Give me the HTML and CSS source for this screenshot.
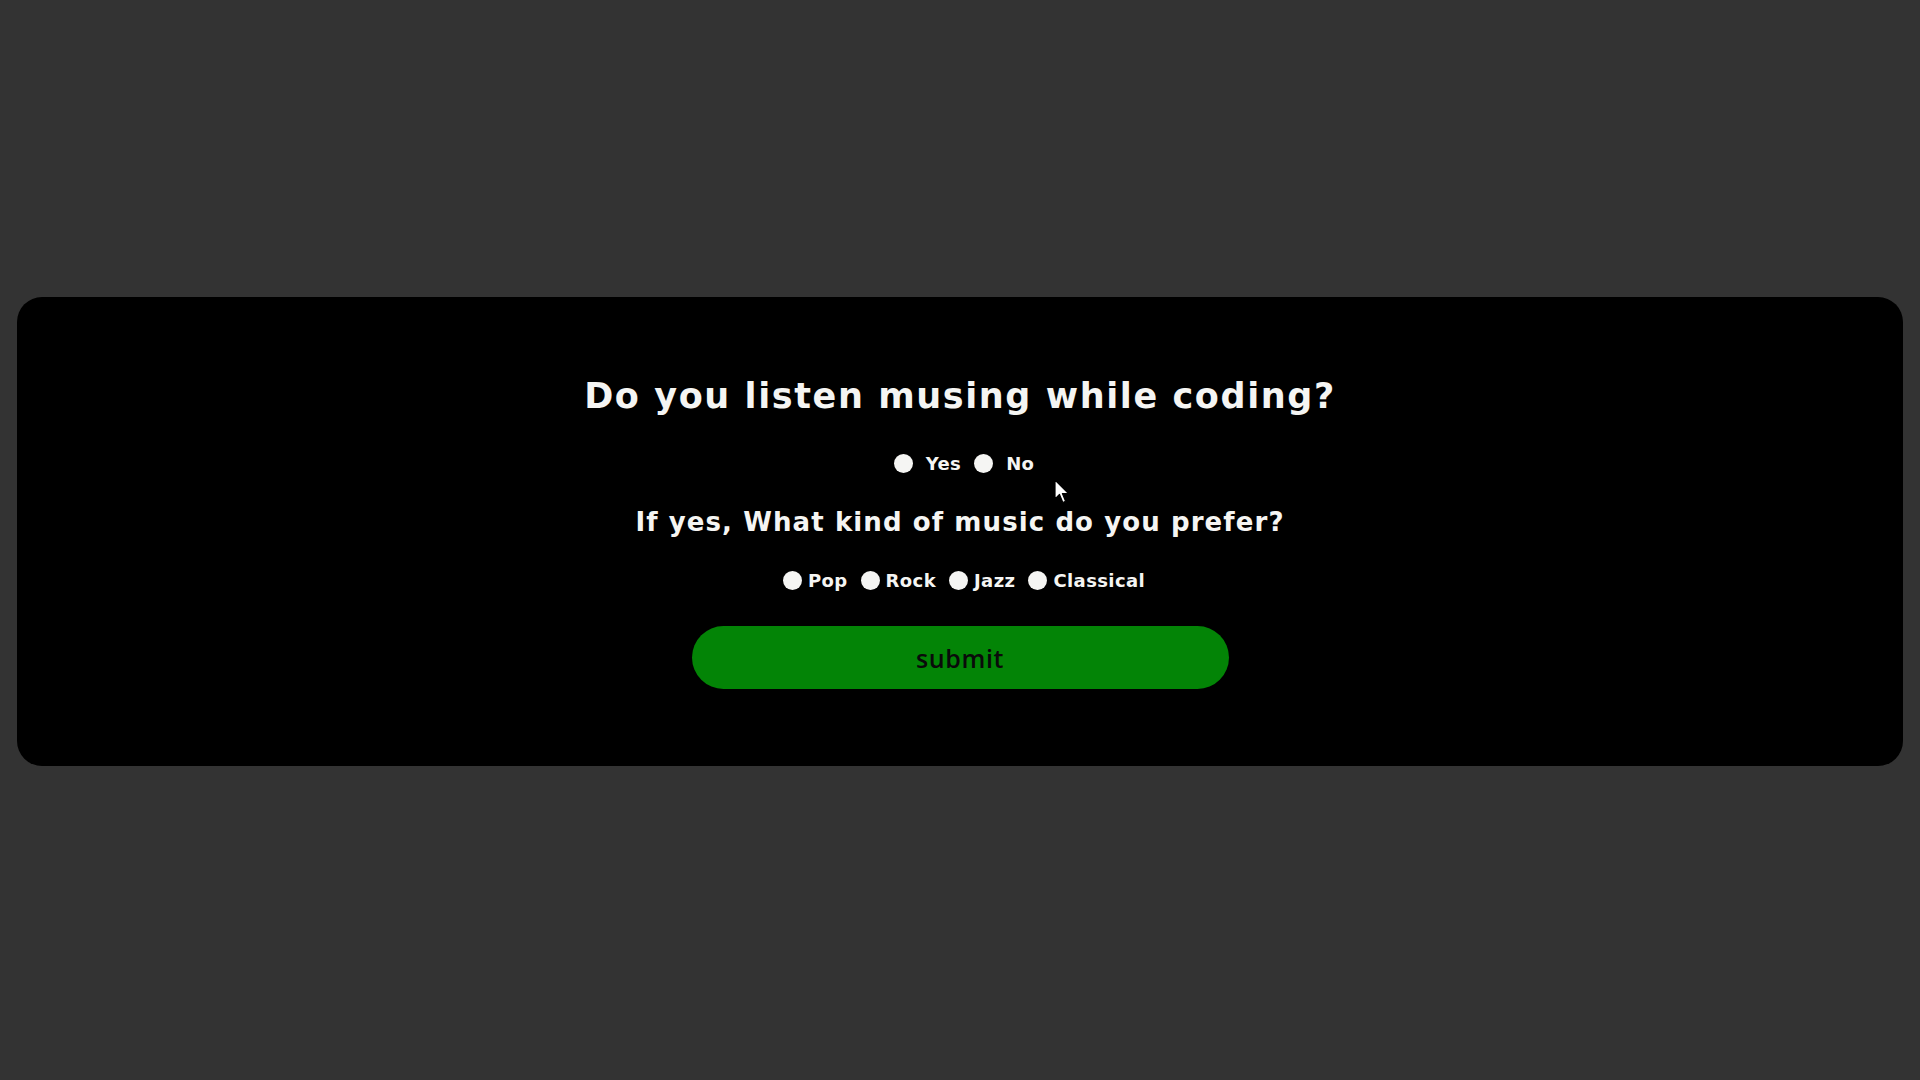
FILE: index.html
```html
<!DOCTYPE html>
<html lang="en">
<head>
<meta charset="utf-8">
<title>Music survey</title>
<link rel="stylesheet" href="styles.css">
</head>
<body>
<main class="page">
  <form class="card">
    <h1 class="title">Do you listen musing while coding?</h1>
    <div class="choices choices-yn">
      <label class="choice"><input type="radio" name="listen"><span>Yes</span></label>
      <label class="choice"><input type="radio" name="listen"><span>No</span></label>
    </div>
    <h2 class="subtitle">If yes, What kind of music do you prefer?</h2>
    <div class="choices choices-genre">
      <label class="choice"><input type="radio" name="genre"><span>Pop</span></label>
      <label class="choice"><input type="radio" name="genre"><span>Rock</span></label>
      <label class="choice"><input type="radio" name="genre"><span>Jazz</span></label>
      <label class="choice"><input type="radio" name="genre"><span>Classical</span></label>
    </div>
    <button type="button" class="submit">submit</button>
    <svg class="cursor" width="16" height="26" viewBox="0 0 16 26" aria-hidden="true">
      <path d="M1 1 L1 20 L5.5 15.5 L8.8 23.5 L11.6 22.3 L8.4 14.6 L14.5 14.6 Z" fill="#fff" stroke="#000" stroke-width="1.2" stroke-linejoin="round"/>
    </svg>
  </form>
</main>
</body>
</html>
```
FILE: styles.css
```css
html, body {
  margin: 0;
  padding: 0;
}
body {
  background: #333333;
  min-height: 100vh;
  font-family: "DejaVu Sans", "Open Sans", sans-serif;
  color: #f5f5f3;
}
.page {
  padding: 297px 17px 0;
}
.card {
  position: relative;
  background: #000;
  border-radius: 25px;
  height: 469px;
  box-sizing: border-box;
  padding-top: 79px;
  display: flex;
  flex-direction: column;
  align-items: center;
}
.title {
  margin: 0;
  font-size: 35px;
  line-height: 40px;
  font-weight: 700;
  letter-spacing: 1.6px;
}
.subtitle {
  margin: 30px 0 0;
  font-size: 26px;
  line-height: 32px;
  font-weight: 700;
  letter-spacing: 1.1px;
}
.choices {
  display: flex;
  align-items: center;
  font-size: 18px;
  line-height: 24px;
  font-weight: 700;
  letter-spacing: 0.4px;
}
.choices-yn {
  margin-top: 36px;
  gap: 13px;
  padding-left: 8px;
}
.choices-yn .choice {
  gap: 13px;
}
.choices-genre {
  margin-top: 31px;
  gap: 13px;
  padding-left: 8px;
}
.choices-genre .choice {
  gap: 6px;
}
.choice {
  display: flex;
  align-items: center;
}
.choice input {
  appearance: none;
  -webkit-appearance: none;
  margin: 0;
  width: 19px;
  height: 19px;
  border-radius: 50%;
  background: #f5f5f3;
  position: relative;
  top: -1px;
}
.submit {
  margin-top: 33px;
  width: 537px;
  height: 63px;
  border: none;
  border-radius: 32px;
  background: #038406;
  color: #0a0a0a;
  font-family: "Open Sans", "DejaVu Sans", sans-serif;
  font-size: 25px;
  font-weight: 600;
  letter-spacing: 0.6px;
}
.cursor {
  position: absolute;
  left: 1037px;
  top: 182px;
}
```
